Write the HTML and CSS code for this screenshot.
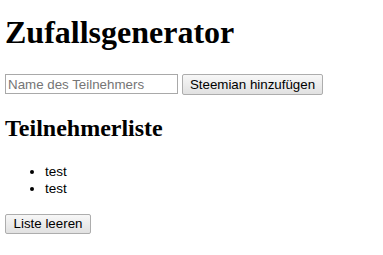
FILE: index.html
```html
<!DOCTYPE html>
<html lang="de">
<head>
<meta charset="utf-8">
<title>Zufallsgenerator</title>
<link rel="stylesheet" href="styles.css">
</head>
<body>
<div class="page">
  <h1 class="title">Zufallsgenerator</h1>
  <div class="add-row">
    <input class="name-input" type="text" placeholder="Name des Teilnehmers">
    <button class="btn btn-add" type="button">Steemian hinzufügen</button>
  </div>
  <h2 class="subtitle">Teilnehmerliste</h2>
  <ul class="list">
    <li>test</li>
    <li>test</li>
  </ul>
  <button class="btn btn-clear" type="button">Liste leeren</button>
</div>
</body>
</html>
```
FILE: styles.css
```css
html, body {
  margin: 0;
  padding: 0;
  background: #ffffff;
}
.page {
  padding: 14px 0 0 5px;
  font-family: "Liberation Serif", "Times New Roman", serif;
  color: #000;
}
.title {
  margin: 0;
  font-size: 32px;
  line-height: 37px;
  font-weight: bold;
}
.add-row {
  margin-top: 23px;
  display: flex;
  align-items: flex-start;
  gap: 4px;
}
.name-input {
  box-sizing: border-box;
  width: 173px;
  height: 20px;
  margin: 0;
  padding: 0 2px;
  border: 1px solid #a9a9a9;
  font-family: "Liberation Sans", Arial, sans-serif;
  font-size: 13.33px;
  color: #000;
  background: #fff;
  outline: none;
}
.name-input::placeholder {
  color: #757575;
}
.btn {
  box-sizing: border-box;
  height: 21px;
  margin: 0;
  padding: 0 6px;
  border: 1px solid #adadad;
  border-radius: 2px;
  background: linear-gradient(#f7f7f7, #e1e1e1);
  font-family: "Liberation Sans", Arial, sans-serif;
  font-size: 13.33px;
  color: #000;
  line-height: 17px;
}
.btn-add {
  width: 141px;
}
.subtitle {
  margin: 19px 0 0;
  font-size: 24px;
  line-height: 28px;
  font-weight: bold;
}
.list {
  margin: 21px 0 0;
  padding-left: 40px;
  font-family: "Liberation Sans", Arial, sans-serif;
  font-size: 13.5px;
  line-height: 17px;
}
.btn-clear {
  display: block;
  margin-top: 17px;
  width: 86px;
  height: 20px;
  line-height: 16px;
}
```
